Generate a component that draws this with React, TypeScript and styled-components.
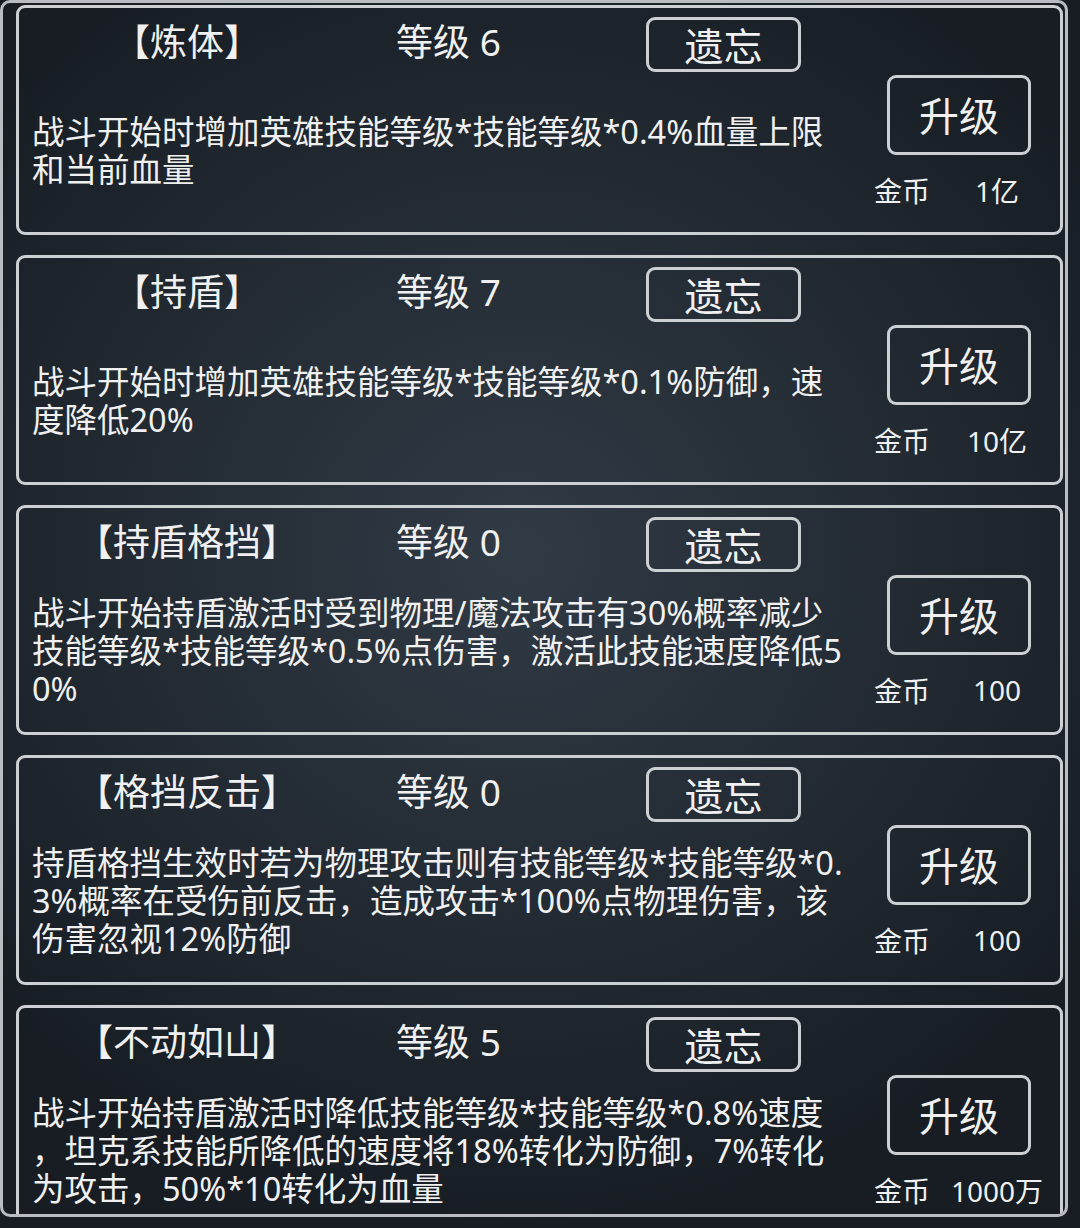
import React from 'react'
import styled, { createGlobalStyle } from 'styled-components'

type Skill = {
  name: string
  level: number
  lines: string[]
  cost: string
}

const skills: Skill[] = [
  {
    name: '【炼体】',
    level: 6,
    lines: ['战斗开始时增加英雄技能等级*技能等级*0.4%血量上限', '和当前血量'],
    cost: '1亿',
  },
  {
    name: '【持盾】',
    level: 7,
    lines: ['战斗开始时增加英雄技能等级*技能等级*0.1%防御，速', '度降低20%'],
    cost: '10亿',
  },
  {
    name: '【持盾格挡】',
    level: 0,
    lines: [
      '战斗开始持盾激活时受到物理/魔法攻击有30%概率减少',
      '技能等级*技能等级*0.5%点伤害，激活此技能速度降低5',
      '0%',
    ],
    cost: '100',
  },
  {
    name: '【格挡反击】',
    level: 0,
    lines: [
      '持盾格挡生效时若为物理攻击则有技能等级*技能等级*0.',
      '3%概率在受伤前反击，造成攻击*100%点物理伤害，该',
      '伤害忽视12%防御',
    ],
    cost: '100',
  },
  {
    name: '【不动如山】',
    level: 5,
    lines: [
      '战斗开始持盾激活时降低技能等级*技能等级*0.8%速度',
      '，坦克系技能所降低的速度将18%转化为防御，7%转化',
      '为攻击，50%*10转化为血量',
    ],
    cost: '1000万',
  },
]

const App: React.FC = () => {
  return (
    <>
      <GlobalStyle />
      <Panel>
        {skills.map((s) => (
          <Card key={s.name}>
            <Left>
              <Header>
                <Title>{s.name}</Title>
                <Level>等级 {s.level}</Level>
                <ForgetButton>遗忘</ForgetButton>
              </Header>
              <Description>
                {s.lines.map((l, i) => (
                  <Line key={i}>{l}</Line>
                ))}
              </Description>
            </Left>
            <Right>
              <UpgradeButton>升级</UpgradeButton>
              <Cost>
                <CostLabel>金币</CostLabel>
                <CostValue>{s.cost}</CostValue>
              </Cost>
            </Right>
          </Card>
        ))}
      </Panel>
    </>
  )
}

export default App

const GlobalStyle = createGlobalStyle`
  html, body {
    margin: 0;
    padding: 0;
  }
  body {
    width: 1080px;
    height: 1228px;
    overflow: hidden;
    background: radial-gradient(ellipse 65% 55% at 48% 45%, #313b45 0%, #252d36 45%, #171d23 100%);
    font-family: "Noto Sans", "Noto Sans CJK SC", sans-serif;
    color: #f0f0f0;
  }
`

const Panel = styled.div`
  box-sizing: border-box;
  width: 1068px;
  height: 1217px;
  border: 3px solid #b9bdc1;
  border-radius: 10px;
  overflow: hidden;
  padding: 2px 2px 0 13px;
  display: flex;
  flex-direction: column;
  gap: 20px;
`

const Card = styled.div`
  box-sizing: border-box;
  flex: 0 0 230px;
  height: 230px;
  border: 3px solid #cdd0d3;
  border-radius: 9px;
  display: flex;
`

const Left = styled.div`
  width: 851px;
  display: flex;
  flex-direction: column;
`

const Header = styled.div`
  display: grid;
  grid-template-columns: 336px 291px 154px;
  align-items: center;
  padding-top: 9px;
  height: 55px;
`

const Title = styled.div`
  text-align: center;
  font-size: 37px;
  line-height: 44px;
  padding-bottom: 6px;
  white-space: nowrap;
`

const Level = styled.div`
  padding-left: 41px;
  padding-bottom: 6px;
  font-size: 37px;
  line-height: 44px;
  white-space: nowrap;
`

const ButtonBase = styled.div`
  box-sizing: border-box;
  border: 3px solid #cdd0d3;
  border-radius: 9px;
  display: flex;
  align-items: center;
  justify-content: center;
  white-space: nowrap;
`

const ForgetButton = styled(ButtonBase)`
  height: 55px;
  width: 155px;
  font-size: 39px;
  padding-bottom: 2px;
`

const Description = styled.div`
  flex: 1;
  display: flex;
  flex-direction: column;
  justify-content: center;
  padding-left: 13px;
  padding-bottom: 2px;
`

const Line = styled.div`
  font-size: 32.5px;
  line-height: 38px;
  white-space: nowrap;
`

const Right = styled.div`
  flex: 1;
  display: flex;
  flex-direction: column;
  padding-top: 67px;
`

const UpgradeButton = styled(ButtonBase)`
  margin-left: 17px;
  width: 144px;
  height: 80px;
  font-size: 40px;
  padding-bottom: 3px;
`

const Cost = styled.div`
  display: grid;
  grid-template-columns: 73px 100px;
  align-items: center;
  margin-top: 15px;
  height: 40px;
  padding-left: 4px;
  font-size: 28px;
  white-space: nowrap;
`

const CostLabel = styled.div``

const CostValue = styled.div`
  text-align: center;
`
